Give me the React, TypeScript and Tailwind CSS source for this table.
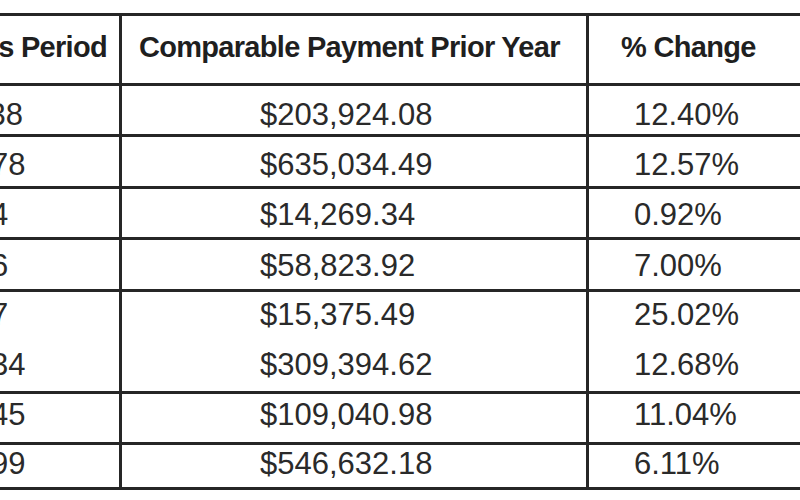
/** Payment comparison table, cropped at the left and right edges of the window. */

type Row = {
  lines: [string, string, string][];
  h: string;
  pt: string;
};

const ROWS: Row[] = [
  { lines: [["$229,211.38", "$203,924.08", "12.40%"]], h: "h-[51px]", pt: "pt-[13px]" },
  { lines: [["$714,862.78", "$635,034.49", "12.57%"]], h: "h-[52px]", pt: "pt-[12px]" },
  { lines: [["$14,400.64", "$14,269.34", "0.92%"]], h: "h-[51px]", pt: "pt-[10px]" },
  { lines: [["$62,941.56", "$58,823.92", "7.00%"]], h: "h-[52px]", pt: "pt-[10px]" },
  {
    lines: [
      ["$19,222.47", "$15,375.49", "25.02%"],
      ["$348,625.34", "$309,394.62", "12.68%"],
    ],
    h: "h-[102px]",
    pt: "pt-[7px]",
  },
  { lines: [["$121,079.45", "$109,040.98", "11.04%"]], h: "h-[51px]", pt: "pt-[5px]" },
  { lines: [["$580,031.99", "$546,632.18", "6.11%"]], h: "h-[45px]", pt: "pt-[3px]" },
];

const LINE = "border-[#262626]";

function Cell({
  values,
  pad,
  pt,
  divider,
}: {
  values: string[];
  pad: string;
  pt: string;
  divider: boolean;
}) {
  return (
    <div
      className={`flex flex-col gap-[19px] ${pad} ${pt} ${
        divider ? `border-r-[3px] ${LINE}` : ""
      }`}
    >
      {values.map((v, i) => (
        <span key={i} className="whitespace-nowrap text-[31px] leading-none">
          {v}
        </span>
      ))}
    </div>
  );
}

export default function App() {
  return (
    <div
      className="h-[500px] w-[800px] overflow-hidden bg-white pt-[13px] text-[#2a2a2a]"
      style={{ fontFamily: '"Liberation Sans", Arial, sans-serif' }}
    >
      <div className={`-ml-[200px] w-[1000px] border-t-[3px] ${LINE}`}>
        {/* header */}
        <div
          className={`grid h-[70px] grid-cols-[322px_467px_1fr] border-b-[3px] ${LINE} text-[29px] font-bold leading-none tracking-[-0.7px] text-[#1f1f1f]`}
        >
          <div className={`flex justify-end pr-[12px] pt-[17px] border-r-[3px] ${LINE}`}>
            <span className="whitespace-nowrap">Payment This Period</span>
          </div>
          <div className={`pl-[17px] pt-[17px] border-r-[3px] ${LINE}`}>
            <span className="whitespace-nowrap">Comparable Payment Prior Year</span>
          </div>
          <div className="pl-[32px] pt-[17px]">
            <span className="whitespace-nowrap">% Change</span>
          </div>
        </div>

        {/* body */}
        {ROWS.map((row, i) => (
          <div
            key={i}
            className={`grid grid-cols-[322px_467px_1fr] border-b-[3px] ${LINE} ${row.h}`}
          >
            <Cell values={row.lines.map((l) => l[0])} pad="pl-[53px]" pt={row.pt} divider />
            <Cell values={row.lines.map((l) => l[1])} pad="pl-[138px]" pt={row.pt} divider />
            <Cell values={row.lines.map((l) => l[2])} pad="pl-[45px]" pt={row.pt} divider={false} />
          </div>
        ))}
      </div>
    </div>
  );
}
